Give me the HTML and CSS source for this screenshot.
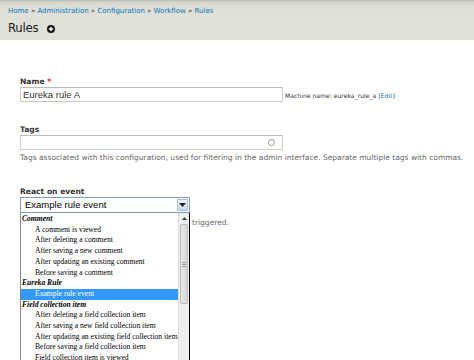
FILE: index.html
```html
<!DOCTYPE html>
<html>
<head>
<meta charset="utf-8">
<link rel="stylesheet" href="styles.css">
</head>
<body>
<div class="header">
  <div class="crumbs"><a href="#">Home</a> » <a href="#">Administration</a> » <a href="#">Configuration</a> » <a href="#">Workflow</a> » <a href="#">Rules</a></div>
  <div class="title-row"><h1>Rules</h1><svg class="plus" width="8" height="8" viewBox="0 0 8 8"><circle cx="4" cy="4" r="4" fill="#111"/><path d="M4 1.8v4.4M1.8 4h4.4" stroke="#fff" stroke-width="1.3"/></svg></div>
</div>
<div class="content">
  <div class="field name-field">
    <label>Name <span class="req">*</span></label>
    <div class="row">
      <div class="input">Eureka rule A</div>
      <span class="machine">Machine name: eureka_rule_a [<a href="#">Edit</a>]</span>
    </div>
  </div>
  <div class="field tags-field">
    <label>Tags</label>
    <div class="input auto"><span class="throbber"></span></div>
    <div class="desc">Tags associated with this configuration, used for filtering in the admin interface. Separate multiple tags with commas.</div>
  </div>
  <div class="field event-field">
    <label>React on event</label>
    <div class="select-wrap">
      <div class="select">Example rule event<span class="arrow"><svg width="7" height="4" viewBox="0 0 7 4"><path d="M0 0h7L3.5 4z" fill="#222"/></svg></span></div>
      <div class="pop-row">
        <div class="listbox">
          <div class="items">
            <div class="grp">Comment</div>
            <div class="opt">A comment is viewed</div>
            <div class="opt">After deleting a comment</div>
            <div class="opt">After saving a new comment</div>
            <div class="opt">After updating an existing comment</div>
            <div class="opt">Before saving a comment</div>
            <div class="grp">Eureka Rule</div>
            <div class="opt sel">Example rule event</div>
            <div class="grp">Field collection item</div>
            <div class="opt">After deleting a field collection item</div>
            <div class="opt">After saving a new field collection item</div>
            <div class="opt">After updating an existing field collection item</div>
            <div class="opt">Before saving a field collection item</div>
            <div class="opt">Field collection item is viewed</div>
          </div>
          <div class="scrollbar">
            <div class="sb-up"><svg width="5" height="3" viewBox="0 0 5 3"><path d="M0 3h5L2.5 0z" fill="#444"/></svg></div>
            <div class="thumb"><span class="grip"></span></div>
          </div>
        </div>
        <div class="desc trig">triggered.</div>
      </div>
    </div>
  </div>
</div>
</body>
</html>
```
FILE: styles.css
```css
html, body { margin: 0; padding: 0; background: #fff; }
body { font-family: "DejaVu Sans", Verdana, sans-serif; color: #333; width: 474px; height: 360px; overflow: hidden; }
a { color: #0074bd; text-decoration: none; }
.header {
  height: 40px;
  background: linear-gradient(#b8b8b0 0px, #d4d4cc 2px, #dcdcd4 5px, #e0e0d8 10px);
  padding: 0 8px;
  box-sizing: border-box;
}
.crumbs { font-size: 7px; padding-top: 7px; line-height: 9px; }
.title-row { display: flex; align-items: center; margin-top: 4px; }
h1 { margin: 0; font-family: "DejaVu Sans Condensed", "DejaVu Sans", sans-serif; font-size: 13px; font-weight: normal; color: #222; line-height: 16px; letter-spacing: -0.2px; }
.plus { margin-left: 8px; margin-top: 1px; display: block; }
.content { padding: 37px 0 0 20px; }
.field label { display: block; font-weight: bold; font-size: 7.6px; line-height: 9px; color: #333; }
.req { color: #e00; }
.row { display: flex; align-items: center; }
.input {
  width: 263px; height: 15px; box-sizing: border-box; border: 1px solid #ccc; border-top-color: #bbb;
  font-family: "Liberation Sans", Arial, sans-serif; font-size: 9.5px; line-height: 13px; padding-left: 2px; color: #333;
  margin-top: 1px; background: #fff;
}
.machine { font-size: 6.1px; margin-left: 2px; color: #333; margin-top: 2px; }
.tags-field { margin-top: 23px; }
.auto { position: relative; }
.throbber { position: absolute; right: 7px; top: 3px; width: 5px; height: 5px; border: 1px solid #999; border-radius: 50%; }
.desc { font-size: 7.5px; color: #666; line-height: 9px; margin-top: 3px; white-space: nowrap; }
.event-field { margin-top: 25px; }
.select {
  width: 170px; height: 16px; box-sizing: border-box; border: 1px solid #7f9db9; margin-top: 1px;
  font-family: "Liberation Sans", Arial, sans-serif; font-size: 9.5px; line-height: 14px; padding-left: 4px; position: relative; color: #000;
}
.arrow {
  position: absolute; right: 1px; top: 1px; width: 11px; height: 12px; box-sizing: border-box;
  border: 1px solid #a8c0e0; background: linear-gradient(#f0f4fa, #c8d6ea); display: flex; align-items: center; justify-content: center;
}
.pop-row { display: flex; }
.listbox {
  width: 170px; height: 150px; box-sizing: border-box; border: 1px solid #000; border-left-color: #888; border-top: none; display: flex; background: #fff;
}
.items { flex: 1; font-family: "Liberation Serif", "Times New Roman", serif; font-size: 7.6px; line-height: 10.7px; color: #000; padding-top: 1px; overflow: hidden; }
.grp { font-weight: bold; font-style: italic; padding-left: 1px; }
.opt { padding-left: 14px; white-space: nowrap; }
.opt.sel { background: #3399ff; color: #fff; }
.scrollbar { width: 10px; background: #eee; border-left: 1px solid #ddd; display: flex; flex-direction: column; align-items: center; }
.sb-up { height: 10px; display: flex; align-items: center; justify-content: center; }
.thumb {
  width: 8px; height: 80px; margin-top: 1px; box-sizing: border-box; border: 1px solid #bbb; border-radius: 2px;
  background: linear-gradient(90deg, #e8e8e8, #d8d8d8); display: flex; align-items: center; justify-content: center;
}
.grip { width: 4px; height: 5px; background: repeating-linear-gradient(#999 0 1px, transparent 1px 2px); }
.trig { margin-top: 5px; margin-left: 2px; }
```
